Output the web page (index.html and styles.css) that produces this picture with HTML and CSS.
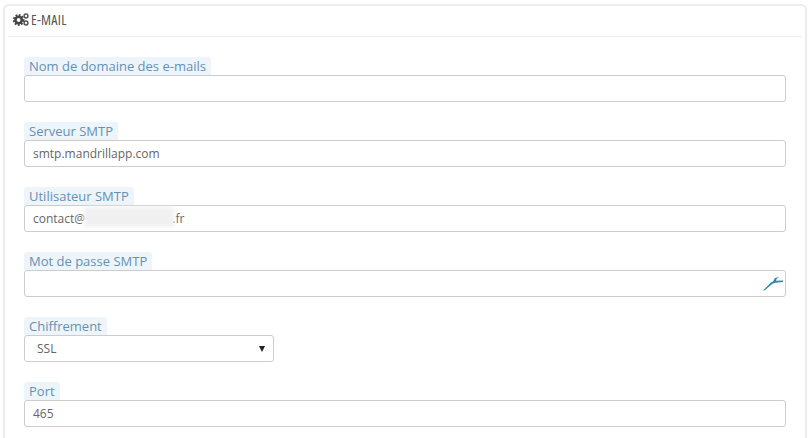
FILE: index.html
```html
<!DOCTYPE html>
<html lang="fr">
<head>
    <meta charset="UTF-8">
    <title>E-mail</title>
    <link rel="stylesheet" href="styles.css">
</head>
<body>
    <div class="panel">
        <div class="panel-heading">
            <svg class="gears" viewBox="0 0 16 13" width="16" height="13" aria-hidden="true">
                <circle cx="5.6" cy="7" r="3.2" fill="none" stroke="#444" stroke-width="2.6"/>
                <circle cx="5.6" cy="7" r="5" fill="none" stroke="#444" stroke-width="1.8" stroke-dasharray="1.8 1.5"/>
                <circle cx="13" cy="3" r="1.9" fill="none" stroke="#555" stroke-width="1.5"/>
                <circle cx="13" cy="10" r="1.9" fill="none" stroke="#555" stroke-width="1.5"/>
            </svg>
            <span class="panel-title">E-MAIL</span>
        </div>

        <div class="field">
            <label class="field-label">Nom de domaine des e-mails</label>
            <input class="field-input" type="text" value="">
        </div>

        <div class="field">
            <label class="field-label">Serveur SMTP</label>
            <input class="field-input" type="text" value="smtp.mandrillapp.com">
        </div>

        <div class="field">
            <label class="field-label">Utilisateur SMTP</label>
            <div class="input-wrap">
                <input class="field-input" type="text" value="contact@                            .fr">
                <div class="blur-patch"></div>
            </div>
        </div>

        <div class="field">
            <label class="field-label">Mot de passe SMTP</label>
            <div class="input-wrap">
                <input class="field-input" type="password" value="">
                <svg class="pass-icon" viewBox="0 0 20 14" width="20" height="14" aria-hidden="true">
                    <path d="M0 13.5 L8 5.5 L10 4.4 L12 1 L16 0 L13.5 2 L13 3.8 L20 3.6 L20 4.9 L12 5.7 L9.2 7 L1.5 13.5 Z" fill="#2b8ba3"/>
                </svg>
            </div>
        </div>

        <div class="field">
            <label class="field-label">Chiffrement</label>
            <div class="select-box">
                <span>SSL</span>
                <span class="select-arrow"></span>
            </div>
        </div>

        <div class="field">
            <label class="field-label">Port</label>
            <input class="field-input" type="text" value="465">
        </div>
    </div>
</body>
</html>
```

FILE: styles.css
```css
html, body {
    height: 100%;
    overflow: hidden;
}

body {
    font-family: "Open Sans", sans-serif;
    font-size: 12px;
    margin: 0;
    padding: 4px 3px 0 3px;
    background-color: #fff;
    color: #555;
    box-sizing: border-box;
}

.panel {
    border: 2px solid #ececec;
    border-bottom: none;
    border-radius: 6px 6px 0 0;
    padding: 0 19px;
    height: 100%;
    box-sizing: border-box;
}

.panel-heading {
    display: flex;
    align-items: center;
    gap: 2px;
    height: 31px;
    margin: 0 -16px 20px -16px;
    padding: 0 0 3px 5px;
    border-bottom: 1px solid #eee;
    box-sizing: border-box;
    color: #555;
}

.panel-title {
    font-size: 14px;
    font-stretch: 75%;
    letter-spacing: 0.3px;
}

.gears {
    display: block;
}

.field {
    margin-bottom: 20px;
}

.field-label {
    display: block;
    width: fit-content;
    height: 18px;
    line-height: 18px;
    padding: 0 5px;
    background-color: #edf5fb;
    border-radius: 3px 3px 0 0;
    font-size: 13px;
    color: #6590b5;
}

.input-wrap {
    position: relative;
}

.field-input {
    display: block;
    width: 100%;
    height: 27px;
    box-sizing: border-box;
    border: 1px solid #ccc;
    border-radius: 3px;
    padding: 0 8px;
    font-family: "Open Sans", sans-serif;
    font-size: 12px;
    color: #666;
    background: #fff;
    outline: none;
}

.blur-patch {
    position: absolute;
    left: 60px;
    top: 2px;
    width: 90px;
    height: 20px;
    background-color: #f0f0f0;
    filter: blur(2px);
}

.pass-icon {
    position: absolute;
    right: 3px;
    top: 7px;
}

.select-box {
    display: flex;
    justify-content: space-between;
    align-items: center;
    width: 250px;
    height: 27px;
    box-sizing: border-box;
    border: 1px solid #ccc;
    border-radius: 3px;
    padding: 0 8px 0 12px;
    font-size: 12px;
    color: #666;
}

.select-arrow {
    width: 0;
    height: 0;
    border-left: 3px solid transparent;
    border-right: 3px solid transparent;
    border-top: 6px solid #222;
}
```
